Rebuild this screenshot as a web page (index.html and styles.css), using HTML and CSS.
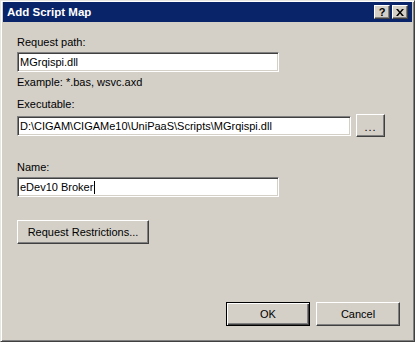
FILE: index.html
```html
<!DOCTYPE html>
<html>
<head>
<meta charset="utf-8">
<link rel="stylesheet" href="styles.css">
</head>
<body>
<div class="window">
  <div class="titlebar">
    <span class="title">Add Script Map</span>
    <div class="caption-buttons">
      <span class="cap-btn help">?</span>
      <span class="cap-btn close">
        <svg width="8" height="7" viewBox="0 0 8 7"><path d="M0 0h2l2 2.5L6 0h2L5 3.5 8 7H6L4 4.5 2 7H0l3-3.5z" fill="#000"/></svg>
      </span>
    </div>
  </div>
  <div class="content">
    <div class="label first">Request path:</div>
    <div class="input short">MGrqispi.dll</div>
    <div class="hint">Example: *.bas, wsvc.axd</div>
    <div class="label exec">Executable:</div>
    <div class="row">
      <div class="input long">D:\CIGAM\CIGAMe10\UniPaaS\Scripts\MGrqispi.dll</div>
      <div class="button browse">...</div>
    </div>
    <div class="label name">Name:</div>
    <div class="input short">eDev10 Broker<span class="caret"></span></div>
    <div class="button restrictions">Request Restrictions...</div>
    <div class="footer">
      <div class="button default">OK</div>
      <div class="button cancel">Cancel</div>
    </div>
  </div>
</div>
</body>
</html>
```
FILE: styles.css
```css
html, body {
  margin: 0;
  padding: 0;
  background: #d4d0c8;
}
.window {
  width: 415px;
  height: 342px;
  box-sizing: border-box;
  background: #d4d0c8;
  border: 1px solid;
  border-color: #e8e6e0 #404040 #404040 #e8e6e0;
  box-shadow: inset 1px 1px #ffffff, inset -1px -1px #808080;
  padding: 1px 2px 2px 2px;
  font-family: "Liberation Sans", Arial, sans-serif;
  font-size: 11px;
  color: #000;
  display: flex;
  flex-direction: column;
}
.titlebar {
  height: 20px;
  background: #0a246a;
  display: flex;
  align-items: center;
  justify-content: space-between;
  padding-left: 4px;
  padding-right: 4px;
}
.title {
  color: #fff;
  font-weight: bold;
  font-size: 11.5px;
}
.caption-buttons {
  display: flex;
  gap: 2px;
}
.cap-btn {
  width: 16px;
  height: 14px;
  box-sizing: border-box;
  background: #d4d0c8;
  border: 1px solid;
  border-color: #fff #404040 #404040 #fff;
  box-shadow: inset -1px -1px #808080;
  display: flex;
  align-items: center;
  justify-content: center;
  font-weight: bold;
  font-size: 11px;
  line-height: 1;
}
.content {
  flex: 1;
  display: flex;
  flex-direction: column;
  align-items: flex-start;
  padding: 0 0 0 14px;
}
.label, .hint {
  line-height: 13px;
}
.label.first { margin-top: 14px; }
.label.exec { margin-top: 9px; }
.label.name { margin-top: 24px; }
.hint { margin-top: 4px; }
.input {
  box-sizing: border-box;
  height: 20px;
  background: #fff;
  border: 1px solid;
  border-color: #808080 #ffffff #ffffff #808080;
  box-shadow: inset 1px 1px #404040, inset -1px -1px #d4d0c8;
  padding: 0 0 0 2px;
  line-height: 18px;
  margin-top: 3px;
  white-space: nowrap;
  display: flex;
  align-items: center;
}
.input.short { width: 262px; }
.input.long { width: 334px; margin-top: 0; }
.row {
  display: flex;
  align-items: center;
  gap: 5px;
  margin-top: 3px;
}
.caret {
  display: inline-block;
  width: 1px;
  height: 13px;
  background: #000;
  margin-left: 1px;
}
.button {
  box-sizing: border-box;
  background: #d4d0c8;
  border: 1px solid;
  border-color: #ffffff #404040 #404040 #ffffff;
  box-shadow: inset -1px -1px #808080;
  display: flex;
  align-items: center;
  justify-content: center;
  height: 23px;
}
.button.browse {
  width: 29px;
  height: 23px;
  letter-spacing: 1px;
  padding-top: 3px;
}
.button.restrictions {
  width: 132px;
  height: 24px;
  margin-top: 23px;
}
.footer {
  margin-top: auto;
  margin-bottom: 13px;
  align-self: flex-end;
  margin-right: 12px;
  display: flex;
  gap: 6px;
}
.footer .button {
  width: 84px;
  height: 24px;
}
.button.default {
  border: 1px solid #000;
  box-shadow: inset 1px 1px #fff, inset -1px -1px #404040, inset -2px -2px #808080;
}
```
